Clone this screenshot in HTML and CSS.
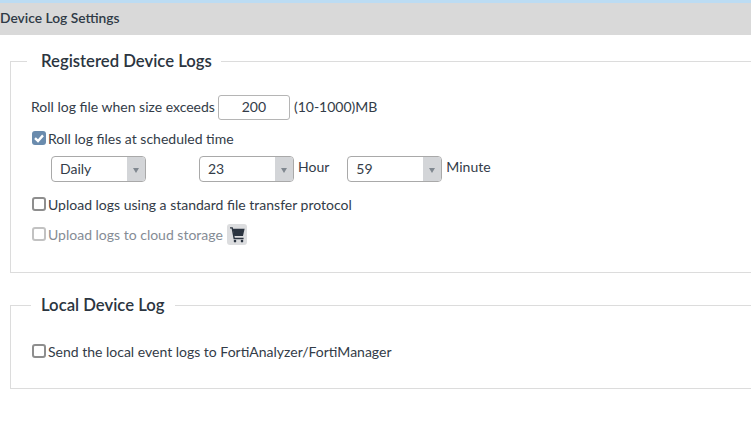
FILE: index.html
```html
<!DOCTYPE html>
<html lang="en">
<head>
<meta charset="utf-8">
<title>Device Log Settings</title>
<link rel="stylesheet" href="styles.css">
</head>
<body>
<div class="top-strip"></div>
<h1 class="page-title">Device Log Settings</h1>
<main class="content">
  <fieldset class="panel panel-registered">
    <legend>Registered Device Logs</legend>
    <div class="row row-size">
      <span>Roll log file when size exceeds</span>
      <input class="num" type="text" value="200">
      <span>(10-1000)MB</span>
    </div>
    <label class="row check-row row-sched">
      <span class="box checked"><svg viewBox="0 0 14 14" width="14" height="14"><path d="M3 7.2 6 10 11 4.4" fill="none" stroke="#fff" stroke-width="2.4"/></svg></span>
      <span>Roll log files at scheduled time</span>
    </label>
    <div class="row row-selects">
      <span class="select sel-daily"><span class="val">Daily</span><span class="arrow"><i></i></span></span>
      <span class="select sel-hour"><span class="val">23</span><span class="arrow"><i></i></span></span>
      <span class="unit">Hour</span>
      <span class="select sel-min"><span class="val">59</span><span class="arrow"><i></i></span></span>
      <span class="unit">Minute</span>
    </div>
    <label class="row check-row row-upload">
      <span class="box"></span>
      <span>Upload logs using a standard file transfer protocol</span>
    </label>
    <label class="row check-row row-cloud disabled">
      <span class="box"></span>
      <span>Upload logs to cloud storage</span>
      <span class="cart"><svg viewBox="0 0 20 20" width="20" height="21"><path d="M3 3.4H5.2L7.2 14H16.6" fill="none" stroke="#2b3440" stroke-width="1.4"/><path d="M5.6 4.2H17.6L16 11.6H7.2Z" fill="#2b3440"/><circle cx="8" cy="16.6" r="1.3" fill="#2b3440"/><circle cx="15" cy="16.6" r="1.3" fill="#2b3440"/></svg></span>
    </label>
  </fieldset>
  <fieldset class="panel panel-local">
    <legend>Local Device Log</legend>
    <label class="row check-row row-local">
      <span class="box"></span>
      <span>Send the local event logs to FortiAnalyzer/FortiManager</span>
    </label>
  </fieldset>
</main>
</body>
</html>
```
FILE: styles.css
```css
* { box-sizing: border-box; }
html, body { margin: 0; height: 100%; overflow: hidden; background: #fff; }
body { font-family: Lato, "Open Sans", sans-serif; font-size: 14px; color: #333c48; }
.top-strip { height: 3px; background: #bcdcf3; }
.page-title {
  margin: 0; height: 32px; padding-left: 0;
  background: #d9d9d9; color: #2f3a46;
  font-size: 13.8px; font-weight: 600; line-height: 30px;
}
.content { padding: 0 0 0 10px; width: 800px; }
.panel {
  margin: 0; padding: 0 0 0 20px; min-width: 0;
  border: 1px solid #dcdcdc;
}
.panel legend {
  margin-left: 0; padding: 0 10px;
  font-size: 16.7px; line-height: 24px; color: #2b3540;
  font-weight: 600;
}
.panel-registered legend { margin-left: -4px; padding: 0 9px 0 14px; }
.panel-registered { margin-top: 14px; height: 224px; }
.panel-local { margin-top: 20px; height: 96px; }
.row { display: flex; align-items: center; height: 24px; }
.row-size { margin-top: 21px; }
.num {
  width: 72px; height: 25px; margin: 2px 4px 0 3px; padding: 0 0 2px;
  border: 1px solid #b5b5b5; border-radius: 3px;
  font: 14px Lato, sans-serif; color: #333c48; text-align: center;
}
.check-row { gap: 2px; }
.box {
  width: 14px; height: 14px; margin-left: 1px; border: 2px solid #8e8e8e; border-radius: 3px;
  background: #fff; display: inline-block; flex: none;
}
.box.checked { border: 0; background: #6a8bad; }
.box svg { display: block; }
.row-sched { margin-top: 8px; height: 24px; }
.row-selects { margin-top: 6px; margin-left: 20px; height: 26px; }
.select {
  display: flex; height: 26px; width: 95px; flex: none;
  border: 1px solid #a9a9a9; border-radius: 4px; overflow: hidden;
}
.val { flex: 1; padding-left: 8px; line-height: 24px; color: #333c48; }
.arrow { width: 18px; background: #d3d5d8; display: flex; align-items: center; justify-content: center; }
.arrow i { width: 0; height: 0; border: 3.5px solid transparent; border-top: 5px solid #808890; margin-top: 5px; }
.sel-hour { margin-left: 53px; }
.sel-min { margin-left: 18px; }
.unit { margin-left: 4px; position: relative; top: -3px; }
.row-upload { margin-top: 10px; height: 24px; }
.row-cloud { margin-top: 6px; height: 24px; color: #858c95; }
.row-cloud .box { border-color: #c2c2c2; }
.cart {
  width: 20px; height: 21px; margin-left: 2px; border-radius: 3px;
  background: #dcdddf; display: block;
}
.cart svg { display: block; }
.row-local { margin-top: 22px; }
```
